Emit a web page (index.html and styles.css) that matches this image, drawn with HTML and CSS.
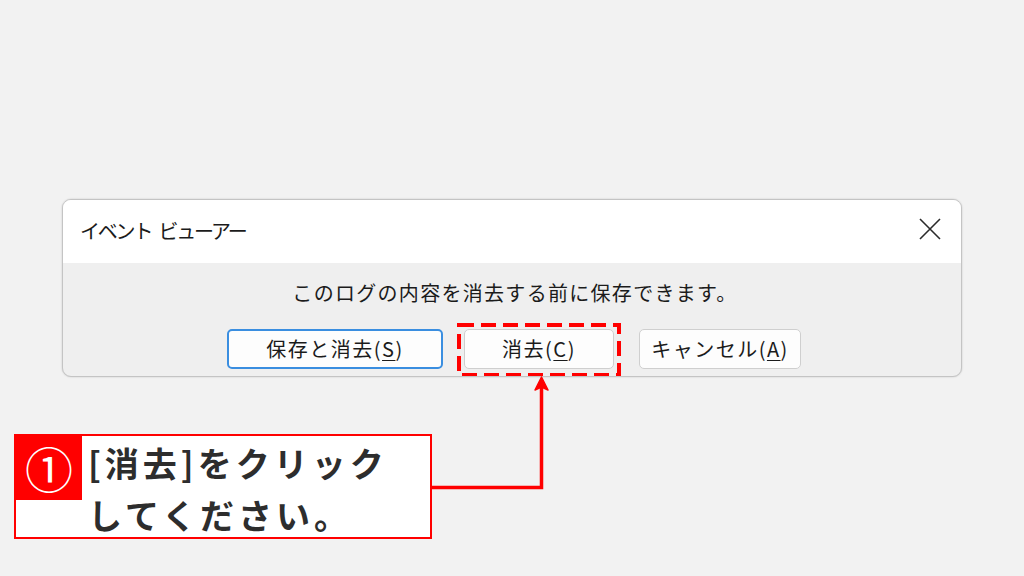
FILE: index.html
```html
<!DOCTYPE html>
<html lang="ja">
<head>
    <meta charset="UTF-8">
    <title>イベント ビューアー</title>
    <link rel="stylesheet" href="styles.css">
</head>
<body>
    <div class="page">
        <div class="dialog">
            <div class="dialog-head">
                <span class="dialog-title">イベント ビューアー</span>
                <svg class="close-icon" width="22" height="22" viewBox="0 0 22 22">
                    <path d="M1 1 L21 21 M21 1 L1 21" stroke="#2b2b2b" stroke-width="1.6" fill="none"/>
                </svg>
            </div>
            <div class="dialog-body">
                <p class="message">このログの内容を消去する前に保存できます。</p>
                <div class="buttons">
                    <button class="btn btn-default btn-save">保存と消去(<u>S</u>)</button>
                    <div class="mark">
                        <button class="btn btn-clear">消去(<u>C</u>)</button>
                        <svg class="mark-box" width="164" height="54" viewBox="0 0 164 54">
                            <rect x="2" y="2" width="160" height="50" fill="none" stroke="#ff0000" stroke-width="4" stroke-dasharray="15 7"/>
                        </svg>
                    </div>
                    <button class="btn btn-cancel">キャンセル(<u>A</u>)</button>
                </div>
            </div>
        </div>

        <div class="callout">
            <div class="step">①</div>
            <div class="step-text">[消去]をクリック<br>してください。</div>
        </div>

        <!-- 注釈の矢印 -->
        <svg class="arrow" width="1024" height="576" viewBox="0 0 1024 576">
            <path d="M432 487.5 H541.5 V386" stroke="#ff0000" stroke-width="3.5" fill="none"/>
            <path d="M541.5 377 L548 390 L541.5 387 L535 390 Z" fill="#ff0000" stroke="#ff0000" stroke-width="1.5" stroke-linejoin="round"/>
        </svg>
    </div>
</body>
</html>
```

FILE: styles.css
```css
body {
    margin: 0;
    background: #f2f2f2;
    font-family: "Noto Sans CJK JP", "Noto Sans", sans-serif;
    color: #1b1b1b;
}

.page {
    position: relative;
    width: 1024px;
    height: 576px;
    padding: 199px 0 0 14px;
    box-sizing: border-box;
    overflow: hidden;
}

.dialog {
    margin-left: 48px;
    width: 900px;
    height: 178px;
    box-sizing: border-box;
    border: 1px solid #c4c4c4;
    border-radius: 9px;
    background: #efefef;
    box-shadow: 0 0 2px rgba(0, 0, 0, 0.18);
    overflow: hidden;
}

.dialog-head {
    height: 61px;
    background: #ffffff;
    display: flex;
    align-items: center;
    justify-content: space-between;
    padding: 0 20px 2px 17px;
}

.dialog-title {
    font-size: 20px;
    letter-spacing: -2.2px;
    word-spacing: 5px;
}

.close-icon {
    display: block;
    margin-top: -3px;
}

.dialog-body {
    display: flex;
    flex-direction: column;
    align-items: center;
}

.message {
    margin: 14px 0 0 6px;
    font-size: 20px;
    line-height: 32px;
    letter-spacing: 1.3px;
}

.buttons {
    display: flex;
    align-items: center;
    margin: 20px 0 0 4px;
}

.btn {
    height: 40px;
    padding: 0;
    box-sizing: border-box;
    background: #fdfdfd;
    border: 1px solid #cfcfcf;
    border-radius: 5px;
    font-family: inherit;
    font-size: 20px;
    letter-spacing: 1.5px;
    color: #1b1b1b;
    line-height: 1;
}

.btn u {
    text-decoration-thickness: 1px;
    text-underline-offset: 3px;
}

.btn-default {
    border: 2px solid #3a8ee0;
}

.btn-save {
    width: 216px;
}

.mark {
    position: relative;
    margin: 0 25px 0 21px;
}

.mark-box {
    position: absolute;
    left: -7px;
    top: -6px;
}

.btn-clear {
    display: block;
    width: 150px;
}

.btn-cancel {
    width: 162px;
}

.callout {
    margin-top: 57px;
    width: 418px;
    height: 105px;
    box-sizing: border-box;
    border: 2px solid #ff0000;
    background: #ffffff;
    display: flex;
    align-items: flex-start;
}

.step {
    width: 66px;
    height: 64px;
    background: #ff0000;
    color: #ffffff;
    font-size: 48px;
    line-height: 62px;
    text-align: center;
    flex-shrink: 0;
}

.step-text {
    margin: 1px 0 0 6px;
    font-size: 34px;
    font-weight: bold;
    line-height: 52px;
    letter-spacing: 4px;
    color: #2d2d2d;
}

.arrow {
    position: absolute;
    left: 0;
    top: 0;
    pointer-events: none;
}
```
